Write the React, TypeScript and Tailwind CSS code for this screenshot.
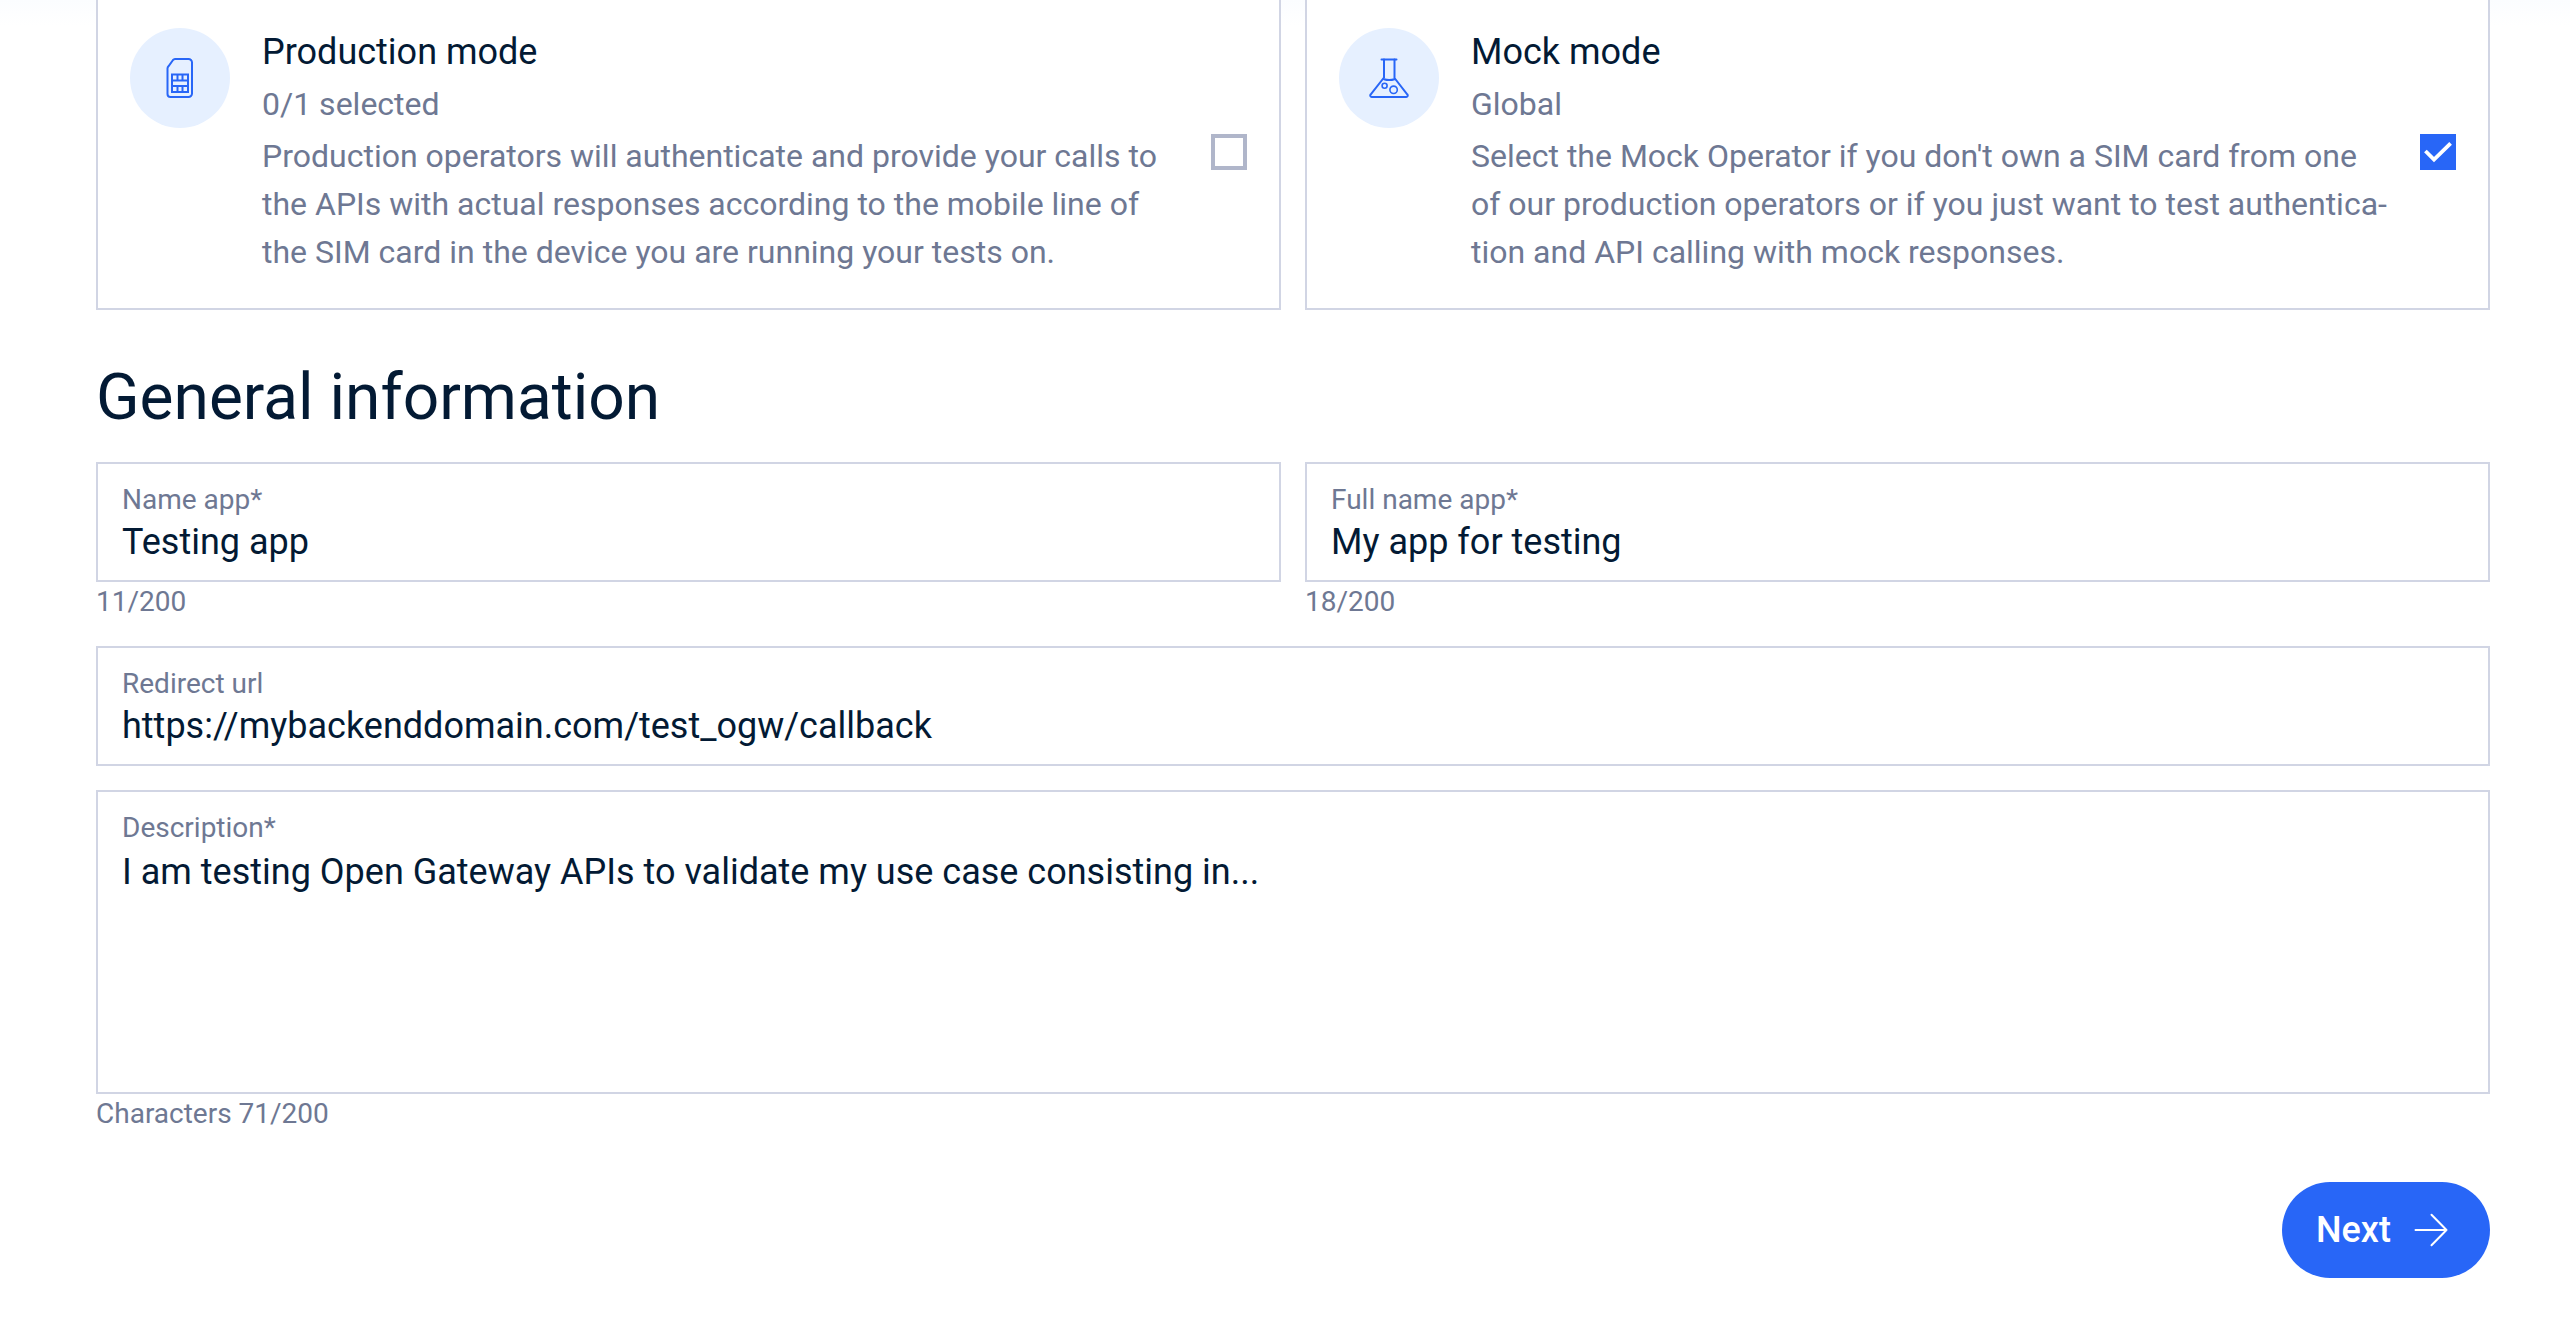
import React from 'react';

function SimIcon() {
  return (
    <svg className="size-12" viewBox="0 0 48 48" fill="none" stroke="#2866f7" strokeWidth="2">
      <path d="M19 5H32.5a3.5 3.5 0 0 1 3.5 3.5V39.5a3.5 3.5 0 0 1-3.5 3.5H14.5a3 3 0 0 1-3-3V14.5a3 3 0 0 1 1-2.2L17 6a3 3 0 0 1 2-1Z" />
      <path d="M16 20.5H32V38H16ZM16 26.5H32M16 32H32M21.5 20.5V26.5M26.5 20.5V26.5M21.5 32V38M26.5 32V38" />
    </svg>
  );
}

function FlaskIcon() {
  return (
    <svg className="size-12" viewBox="0 0 48 48" fill="none" stroke="#2866f7" strokeWidth="2" strokeLinecap="round">
      <path d="M16.5 5.4H31.5" />
      <path d="M19 5.4V23.5L5.6 40.5A1.5 1.5 0 0 0 6.8 43H41.2A1.5 1.5 0 0 0 42.4 40.5L29.5 24V5.4" />
      <path d="M19 25.2C22 26.2 26.5 26.2 29.5 25.2" />
      <circle cx="19.6" cy="31.8" r="2.5" strokeWidth="1.6" />
      <circle cx="28.6" cy="35.8" r="3.7" strokeWidth="1.6" />
    </svg>
  );
}

function Checkbox({ checked }: { checked: boolean }) {
  if (!checked) {
    return <span className="size-9 shrink-0 border-4 border-[#b0b6ca]" />;
  }
  return (
    <span className="size-9 shrink-0 bg-[#2866f7]">
      <svg className="size-9" viewBox="0 0 36 36" fill="none" stroke="#fff" strokeWidth="3.8">
        <path d="M5.4 17L14 25.6L30.6 9.4" />
      </svg>
    </span>
  );
}

type ModeCardProps = {
  icon: React.ReactNode;
  title: string;
  subtitle: string;
  lines: string[];
  checked: boolean;
};

function ModeCard({ icon, title, subtitle, lines, checked }: ModeCardProps) {
  return (
    <div className="flex h-[310px] items-center border-2 border-t-0 border-[#d1d5e4] bg-white px-8 pt-7 pb-8">
      <div className="flex size-[100px] shrink-0 items-center justify-center self-start rounded-full bg-[#e6f0ff]">
        {icon}
      </div>
      <div className="ml-8 flex flex-1 flex-col gap-1 text-[32px] leading-[48px] whitespace-nowrap text-[#6e7893]">
        <h2 className="text-[36px] leading-[48px] text-[#031a34]">{title}</h2>
        <p>{subtitle}</p>
        <p>
          {lines.map((line) => (
            <span key={line} className="block">
              {line}
            </span>
          ))}
        </p>
      </div>
      <Checkbox checked={checked} />
    </div>
  );
}

function Field({ label, value, tall = false }: { label: string; value: string; tall?: boolean }) {
  return (
    <div
      className={
        tall
          ? 'h-[304px] border-2 border-[#d1d5e4] bg-white px-6 pt-[18px]'
          : 'h-[120px] border-2 border-[#d1d5e4] bg-white px-6 pt-[18px]'
      }
    >
      <div className="text-[28px] leading-[36px] text-[#6e7893]">{label}</div>
      <div className={tall ? 'mt-0.5 text-[36px] leading-[48px] text-[#031a34]' : 'text-[36px] leading-[48px] text-[#031a34]'}>
        {value}
      </div>
    </div>
  );
}

function Counter({ children }: { children: React.ReactNode }) {
  return <p className="text-[28px] leading-[40px] text-[#6e7893]">{children}</p>;
}

export default function App() {
  return (
    <main className="h-[1340px] w-[2570px] overflow-hidden bg-white bg-linear-to-b from-[#fbfdff] from-[0px] to-white to-[26px] pr-20 pl-24 font-['Roboto',sans-serif]">
      <section className="grid grid-cols-2 gap-6">
        <ModeCard
          icon={<SimIcon />}
          title="Production mode"
          subtitle="0/1 selected"
          lines={[
            'Production operators will authenticate and provide your calls to',
            'the APIs with actual responses according to the mobile line of',
            'the SIM card in the device you are running your tests on.',
          ]}
          checked={false}
        />
        <ModeCard
          icon={<FlaskIcon />}
          title="Mock mode"
          subtitle="Global"
          lines={[
            "Select the Mock Operator if you don't own a SIM card from one",
            'of our production operators or if you just want to test authentica-',
            'tion and API calling with mock responses.',
          ]}
          checked
        />
      </section>

      <h1 className="mt-12 text-[64px] leading-[80px] text-[#031a34]">General information</h1>

      <section className="mt-6 grid grid-cols-2 gap-6">
        <div>
          <Field label="Name app*" value="Testing app" />
          <Counter>11/200</Counter>
        </div>
        <div>
          <Field label="Full name app*" value="My app for testing" />
          <Counter>18/200</Counter>
        </div>
      </section>

      <div className="mt-6 flex flex-col gap-6">
        <Field label="Redirect url" value="https://mybackenddomain.com/test_ogw/callback" />
        <div>
          <Field tall label="Description*" value="I am testing Open Gateway APIs to validate my use case consisting in..." />
          <Counter>Characters 71/200</Counter>
        </div>
      </div>

      <div className="mt-12 flex justify-end">
        <button className="flex h-24 w-52 items-center gap-4 rounded-full bg-[#2866f7] pl-[34px] text-[36px] font-medium text-white">
          Next
          <svg className="size-12" viewBox="0 0 48 48" fill="none" stroke="#fff" strokeWidth="2" strokeLinecap="round" strokeLinejoin="round">
            <path d="M8.5 24H39.5M24.5 8.8L39.5 24L24.5 39.2" />
          </svg>
        </button>
      </div>
    </main>
  );
}
